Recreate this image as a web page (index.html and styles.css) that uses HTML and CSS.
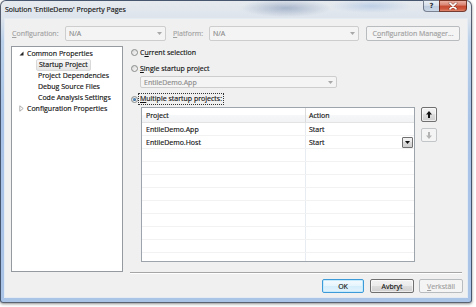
FILE: index.html
```html
<!DOCTYPE html>
<html>
<head>
<meta charset="utf-8">
<link rel="stylesheet" href="styles.css">
</head>
<body>
<div class="window">
  <div class="titlebar">
    <span class="title">Solution 'EntileDemo' Property Pages</span>
    <div class="caption">
      <div class="cbtn help">?</div>
      <div class="cbtn close">
        <svg width="10" height="8" viewBox="0 0 10 8"><path d="M2 1.2 L8 6.8 M8 1.2 L2 6.8" stroke="#5a1a10" stroke-width="2.8" stroke-linecap="round" opacity=".6"/><path d="M2 1.2 L8 6.8 M8 1.2 L2 6.8" stroke="#fff" stroke-width="1.7" stroke-linecap="round"/></svg>
      </div>
    </div>
  </div>
  <div class="client">
    <div class="config-row">
      <span class="lbl lbl-cfg dis"><u>C</u>onfiguration:</span>
      <div class="combo dis combo-cfg"><span>N/A</span><svg class="carrow" width="5" height="3" viewBox="0 0 5 3"><path d="M0 0H5L2.5 3Z" fill="#a8a8a8"/></svg></div>
      <span class="lbl lbl-plat dis"><u>P</u>latform:</span>
      <div class="combo dis combo-plat"><span>N/A</span><svg class="carrow" width="5" height="3" viewBox="0 0 5 3"><path d="M0 0H5L2.5 3Z" fill="#a8a8a8"/></svg></div>
      <div class="btn dis btn-mgr">C<u>o</u>nfiguration Manager...</div>
    </div>
    <div class="main">
      <div class="tree">
        <div class="node"><svg class="exp" width="5" height="5" viewBox="0 0 5 5"><path d="M4.5 0.5V4.5H0.5Z" fill="#262626"/></svg><span>Common Properties</span></div>
        <div class="node child"><span class="sel">Startup Project</span></div>
        <div class="node child"><span>Project Dependencies</span></div>
        <div class="node child"><span>Debug Source Files</span></div>
        <div class="node child"><span>Code Analysis Settings</span></div>
        <div class="node"><svg class="exp" width="5" height="7" viewBox="0 0 5 7"><path d="M0.8 0.8L4.2 3.5L0.8 6.2Z" fill="none" stroke="#a6a6a6" stroke-width="0.9"/></svg><span>Configuration Properties</span></div>
      </div>
      <div class="panel">
        <div class="opt opt1"><span class="radio"></span><span>C<u>u</u>rrent selection</span></div>
        <div class="opt opt2"><span class="radio"></span><span><u>S</u>ingle startup project</span></div>
        <div class="combo dis combo-proj"><span>EntileDemo.App</span><svg class="carrow" width="5" height="3" viewBox="0 0 5 3"><path d="M0 0H5L2.5 3Z" fill="#a8a8a8"/></svg></div>
        <div class="opt opt3"><span class="radio checked"></span><span class="focus"><u>M</u>ultiple startup projects:</span></div>
        <div class="grid-wrap">
          <div class="grid">
            <div class="ghead"><div class="c1">Project</div><div class="c2">Action</div></div>
            <div class="grow"><div class="c1">EntileDemo.App</div><div class="c2">Start</div></div>
            <div class="grow"><div class="c1">EntileDemo.Host</div><div class="c2"><span>Start</span><span class="dd"><svg width="5" height="3" viewBox="0 0 5 3"><path d="M0 0H5L2.5 3Z" fill="#111"/></svg></span></div></div>
            <div class="grow"><div class="c1"></div><div class="c2"></div></div>
            <div class="grow"><div class="c1"></div><div class="c2"></div></div>
            <div class="grow"><div class="c1"></div><div class="c2"></div></div>
            <div class="grow"><div class="c1"></div><div class="c2"></div></div>
            <div class="grow"><div class="c1"></div><div class="c2"></div></div>
            <div class="grow"><div class="c1"></div><div class="c2"></div></div>
            <div class="grow"><div class="c1"></div><div class="c2"></div></div>
            <div class="grow"><div class="c1"></div><div class="c2"></div></div>
            <div class="grow"><div class="c1"></div><div class="c2"></div></div>
          </div>
          <div class="side-btns">
            <div class="sbtn up"><svg width="6" height="7" viewBox="0 0 6 7"><path d="M3 0L6 3.5H4V7H2V3.5H0Z" fill="#111"/></svg></div>
            <div class="sbtn down"><svg width="6" height="7" viewBox="0 0 6 7"><path d="M3 7L6 3.5H4V0H2V3.5H0Z" fill="#b4b4b4"/></svg></div>
          </div>
        </div>
      </div>
    </div>
    <div class="buttons">
      <div class="btn btn-ok">OK</div>
      <div class="btn btn-cancel">Avbryt</div>
      <div class="btn dis btn-apply"><u>V</u>erkställ</div>
    </div>
  </div>
</div>
</body>
</html>
```

FILE: styles.css
```css
* { box-sizing: border-box; }
html, body { margin: 0; padding: 0; }
body {
  width: 476px;
  height: 307px;
  overflow: hidden;
  background: #ffffff;
  font-family: "Open Sans", "Noto Sans", sans-serif;
  font-size: 7px;
  color: #111;
  -webkit-text-stroke: 0.15px currentColor;
}
u { text-decoration: underline; text-underline-offset: 1px; }

.window {
  width: 472px;
  height: 303px;
  display: flex;
  flex-direction: column;
  padding: 0 3px 4px 3px;
  border: 1px solid rgba(30, 40, 60, 0.7);
  border-radius: 6px 6px 3px 3px;
  background:
    radial-gradient(ellipse 45px 9px at 285px 7px, rgba(60, 90, 140, 0.35), rgba(60, 90, 140, 0)),
    radial-gradient(ellipse 40px 7px at 370px 5px, rgba(120, 160, 215, 0.35), rgba(120, 160, 215, 0)),
    linear-gradient(to bottom, #e6eaef 0px, #dde4ec 17px, #b9cfe9 40px, #a7c2e6 120px, #a9c4e7 100%);
  box-shadow: 0 1px 3px rgba(0, 0, 0, 0.45);
}

.titlebar {
  height: 17px;
  display: flex;
  align-items: flex-start;
}
.title {
  padding-left: 1px;
  margin-top: 4px;
  line-height: 10px;
  color: #111;
}
.caption {
  display: flex;
  margin-left: auto;
  margin-right: 1px;
  margin-top: -1px;
}
.cbtn {
  height: 12px;
  display: flex;
  align-items: center;
  justify-content: center;
}
.help {
  width: 16px;
  border: 1px solid rgba(50, 60, 80, 0.6);
  border-right: none;
  border-radius: 0 0 0 4px;
  background: linear-gradient(to bottom, #eaf0f6 0%, #d3dde9 45%, #bccbdd 50%, #cbd8e8 100%);
  color: #2a2f38;
  font-family: "DejaVu Sans", sans-serif;
  font-size: 7px;
  font-weight: bold;
  line-height: 10px;
  -webkit-text-stroke: 0;
}
.close {
  width: 28px;
  border: 1px solid rgba(80, 25, 15, 0.75);
  border-radius: 0 0 4px 0;
  background: linear-gradient(to bottom, #eab0a3 0%, #d98473 40%, #c74b33 52%, #cf583e 80%, #e08a70 100%);
}

.client {
  flex: 1;
  display: flex;
  flex-direction: column;
  background: #f0f0f0;
  border: 1px solid #e4ebf3;
  padding: 7px 4px 0 6px;
}

.config-row {
  display: flex;
  height: 15px;
  align-items: center;
  padding-left: 1px;
}
.lbl { line-height: 15px; white-space: nowrap; }
.lbl-cfg { width: 53px; }
.lbl-plat { width: 36px; margin-left: 7px; }
.dis { color: #a2a2a2; }

.combo {
  display: flex;
  align-items: center;
  justify-content: space-between;
  border: 1px solid #cdcdcd;
  border-radius: 2px;
  background: #f4f4f4;
  padding: 0 3px 0 3px;
  white-space: nowrap;
}
.combo.dis span { color: #8a8a8a; }
.combo-cfg { width: 101px; height: 15px; }
.combo-plat { width: 150px; height: 15px; }
.carrow { flex: none; }

.btn {
  display: flex;
  align-items: center;
  justify-content: center;
  border: 1px solid #707070;
  border-radius: 2px;
  white-space: nowrap;
  background: linear-gradient(to bottom, #f2f2f2 0%, #ebebeb 50%, #dddddd 50%, #cfcfcf 100%);
  box-shadow: inset 0 0 0 1px rgba(255, 255, 255, 0.6);
}
.btn.dis {
  border-color: #b9bcbf;
  background: #f4f4f4;
  box-shadow: none;
  color: #a0a0a0;
}
.btn-mgr { width: 94px; height: 15px; margin-left: 7px; }

.main {
  display: flex;
  margin-top: 5px;
  height: 227px;
}
.tree {
  width: 112px;
  height: 226px;
  border: 1px solid #959aa1;
  background: #fff;
  padding-top: 1px;
}
.node {
  height: 11px;
  display: flex;
  align-items: center;
  padding-left: 7px;
  white-space: nowrap;
}
.exp { flex: none; width: 5px; margin-right: 3px; }
.node.child { padding-left: 24px; }
.node.child span { padding: 0 2px; line-height: 10px; }
.node .sel {
  border: 1px solid #d9d9d9;
  border-radius: 2px;
  background: linear-gradient(to bottom, #f8f8f8, #e5e5e5);
  padding: 0 1px;
}

.panel {
  margin-left: 7px;
  width: 332px;
  height: 227px;
  border-bottom: 1px solid #a6a6a6;
  box-shadow: 0 1px 0 #ffffff;
  display: flex;
  flex-direction: column;
}
.opt {
  height: 12px;
  display: flex;
  align-items: center;
  padding-left: 1px;
  white-space: nowrap;
}
.opt2 { margin-top: 4px; }
.opt3 { margin-top: 5px; }
.radio {
  flex: none;
  width: 7px;
  height: 7px;
  margin-right: 2px;
  border-radius: 50%;
  border: 1px solid #8a8b8b;
  background: linear-gradient(135deg, #d4d4d4, #fbfbfb);
  position: relative;
}
.radio.checked::after {
  content: "";
  position: absolute;
  left: 1px;
  top: 1px;
  width: 3px;
  height: 3px;
  border-radius: 50%;
  background: radial-gradient(circle at 40% 40%, #5d9ad0, #1b4a78);
}
.focus {
  outline: 1px dotted #333;
  outline-offset: 0;
  padding: 0 1px;
  line-height: 10px;
  margin-left: -1px;
}
.combo-proj {
  margin-top: 2px;
  margin-left: 10px;
  width: 197px;
  height: 12px;
}

.grid-wrap {
  display: flex;
  margin-top: 2px;
  margin-left: 11px;
}
.grid {
  width: 274px;
  height: 155px;
  border: 1px solid #9ea4ab;
  background: #fff;
  overflow: hidden;
}
.ghead {
  height: 15px;
  display: flex;
  border-bottom: 1px solid #e3e3e3;
  background: linear-gradient(to bottom, #ffffff 0%, #ffffff 50%, #f6f7f8 50%, #f2f3f5 100%);
}
.ghead .c1 { border-right: 1px solid #dcdcdc; }
.c1 {
  width: 164px;
  flex: none;
  padding-left: 4px;
  display: flex;
  align-items: center;
  border-right: 1px solid #e6ecf2;
  white-space: nowrap;
}
.c2 {
  flex: 1;
  padding-left: 3px;
  display: flex;
  align-items: center;
  justify-content: space-between;
  white-space: nowrap;
}
.grow {
  height: 13px;
  display: flex;
  border-bottom: 1px solid #f2f2f2;
  flex: none;
}
.dd {
  width: 11px;
  height: 11px;
  margin-right: 1px;
  display: flex;
  align-items: center;
  justify-content: center;
  border: 1px solid #707070;
  border-radius: 1px;
  background: linear-gradient(to bottom, #f2f2f2 0%, #ebebeb 50%, #dddddd 50%, #cfcfcf 100%);
}

.side-btns {
  margin-left: 6px;
  display: flex;
  flex-direction: column;
}
.sbtn {
  width: 16px;
  display: flex;
  align-items: center;
  justify-content: center;
  border-radius: 2px;
}
.sbtn.up {
  height: 15px;
  border: 1px solid #707070;
  background: linear-gradient(to bottom, #f2f2f2 0%, #ebebeb 50%, #dddddd 50%, #cfcfcf 100%);
  box-shadow: inset 0 0 0 1px rgba(255, 255, 255, 0.6);
}
.sbtn.down {
  height: 14px;
  margin-top: 6px;
  border: 1px solid #c3c6c9;
  background: #f4f4f4;
}

.buttons {
  display: flex;
  justify-content: flex-end;
  margin-top: 6px;
}
.buttons .btn { height: 14px; }
.btn-ok {
  width: 42px;
  border-color: #3c9ad8;
  background: linear-gradient(to bottom, #f3fafe 0%, #e6f4fc 50%, #d3edfb 50%, #e2f3fc 100%);
  box-shadow: inset 0 0 0 1px #c6ebfc;
}
.btn-cancel { width: 44px; margin-left: 6px; }
.btn-apply { width: 44px; margin-left: 5px; }
```
